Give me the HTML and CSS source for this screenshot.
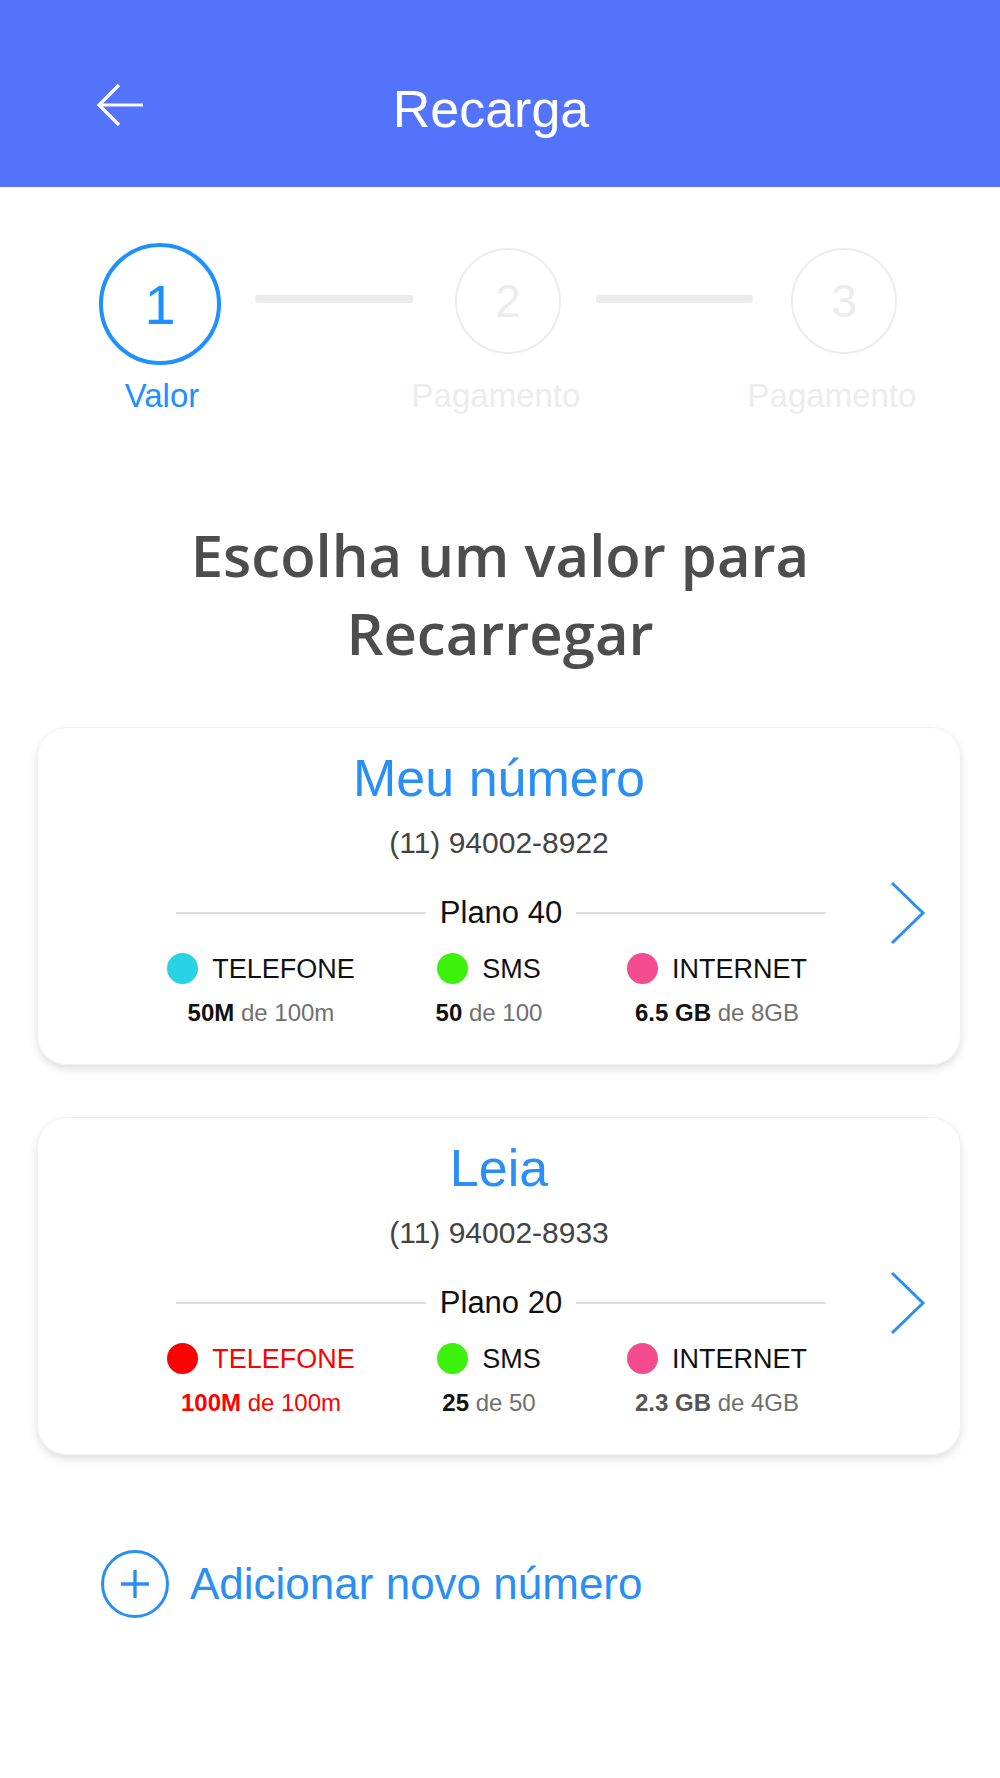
FILE: index.html
```html
<!DOCTYPE html>
<html lang="pt-BR">
<head>
    <meta charset="UTF-8">
    <title>Recarga</title>
    <meta name="viewport" content="width=device-width, initial-scale=1.0">
    <link rel="stylesheet" href="styles.css">
</head>
<body>

<header class="topbar">
    <svg class="back" width="50" height="44" viewBox="0 0 50 44">
        <path d="M47 22 H3 M23 2 L3 22 L23 42" fill="none" stroke="#fff" stroke-width="3.2"/>
    </svg>
    <h1>Recarga</h1>
    <span></span>
</header>

<div class="steps">
    <div class="step active">
        <div class="circle">1</div>
        <div class="label">Valor</div>
    </div>
    <div class="bar bar-1"></div>
    <div class="step">
        <div class="circle">2</div>
        <div class="label">Pagamento</div>
    </div>
    <div class="bar bar-2"></div>
    <div class="step">
        <div class="circle">3</div>
        <div class="label">Pagamento</div>
    </div>
</div>

<h2 class="title">Escolha um valor para<br>Recarregar</h2>

<div class="card">
    <div class="name">Meu número</div>
    <div class="phone">(11) 94002-8922</div>
    <div class="plan">
        <span class="rule"></span>
        <span class="plan-name">Plano 40</span>
        <span class="rule"></span>
        <svg class="next" width="36" height="64" viewBox="0 0 36 64">
            <path d="M2 2 L33 32 L2 62" fill="none" stroke="#2a8ff5" stroke-width="3"/>
        </svg>
    </div>
    <div class="usage">
        <div class="item">
            <div class="item-head"><span class="dot cyan"></span>TELEFONE</div>
            <div class="value"><b>50M</b> de 100m</div>
        </div>
        <div class="item">
            <div class="item-head"><span class="dot green"></span>SMS</div>
            <div class="value"><b>50</b> de 100</div>
        </div>
        <div class="item">
            <div class="item-head"><span class="dot pink"></span>INTERNET</div>
            <div class="value"><b>6.5 GB</b> de 8GB</div>
        </div>
    </div>
</div>

<div class="card">
    <div class="name">Leia</div>
    <div class="phone">(11) 94002-8933</div>
    <div class="plan">
        <span class="rule"></span>
        <span class="plan-name">Plano 20</span>
        <span class="rule"></span>
        <svg class="next" width="36" height="64" viewBox="0 0 36 64">
            <path d="M2 2 L33 32 L2 62" fill="none" stroke="#2a8ff5" stroke-width="3"/>
        </svg>
    </div>
    <div class="usage">
        <div class="item alert">
            <div class="item-head"><span class="dot red"></span>TELEFONE</div>
            <div class="value"><b>100M</b> de 100m</div>
        </div>
        <div class="item">
            <div class="item-head"><span class="dot green"></span>SMS</div>
            <div class="value"><b>25</b> de 50</div>
        </div>
        <div class="item">
            <div class="item-head"><span class="dot pink"></span>INTERNET</div>
            <div class="value"><b class="soft">2.3 GB</b> de 4GB</div>
        </div>
    </div>
</div>

<div class="add">
    <span class="add-icon">
        <svg width="30" height="30" viewBox="0 0 30 30">
            <path d="M15 1 V29 M1 15 H29" stroke="#2a8ff5" stroke-width="3.4"/>
        </svg>
    </span>
    Adicionar novo número
</div>

</body>
</html>
```

FILE: styles.css
```css
body { margin: 0; background: #fff; font-family: "Liberation Sans", Arial, Helvetica, sans-serif; color: #222; }

.topbar { height: 187px; box-sizing: border-box; padding: 30px 114px 0 96px; background: #5373fa; display: grid; grid-template-columns: 1fr auto 1fr; align-items: center; }
.topbar h1 { margin: 0; font-size: 52px; font-weight: normal; color: #fff; line-height: 60px; }
.back { display: block; margin-top: -8px; }

.steps { display: flex; align-items: flex-start; padding: 56px 0 0 99px; }
.step { width: 106px; display: flex; flex-direction: column; align-items: center; height: 172px; }
.step.active { width: 122px; }
.circle { width: 106px; height: 106px; flex: none; margin-top: 5px; box-sizing: border-box; border: 2px solid #ececec; border-radius: 50%; display: flex; align-items: center; justify-content: center; font-size: 46px; color: #ececec; }
.step.active .circle { width: 122px; height: 122px; margin-top: 0; border: 4px solid #1e90ff; font-size: 56px; color: #1e90ff; }
.label { margin-top: auto; margin-right: 24px; font-size: 33px; line-height: 38px; color: #ececec; white-space: nowrap; }
.step.active .label { margin-right: -4px; color: #1e90ff; }
.bar { height: 8px; flex: none; margin-top: 52px; border-radius: 3px; background: #ececec; }
.bar-1 { width: 158px; margin-left: 34px; margin-right: 42px; }
.bar-2 { width: 157px; margin-left: 35px; margin-right: 38px; }

.title { margin: 101px 0 55px; text-align: center; font-family: "Open Sans", sans-serif; font-weight: 600; font-size: 58px; line-height: 78px; color: #4d4d4d; }

.card { margin: 0 39px 52px 37px; height: 338px; box-sizing: border-box; padding-top: 21px; border: 1px solid #f1f1f1; border-radius: 30px; box-shadow: 0 4px 8px rgba(0, 0, 0, 0.13); text-align: center; }
.name { font-size: 52px; line-height: 58px; color: #2a8ff5; }
.phone { margin-top: 19px; font-size: 30px; line-height: 34px; color: #444; }

.plan { display: flex; align-items: center; margin-top: 21px; padding: 0 34px 0 138px; }
.rule { flex: 1; height: 2px; background: #dedede; }
.plan-name { padding: 0 14px 0 14px; font-size: 31px; line-height: 36px; color: #111; }
.next { margin-left: 64px; display: block; }

.usage { display: grid; grid-template-columns: repeat(3, 228px); margin: 8px 0 0 109px; }
.item { display: flex; flex-direction: column; align-items: center; }
.item-head { display: flex; align-items: center; gap: 14px; font-size: 27px; line-height: 30px; color: #111; }
.dot { width: 31px; height: 31px; border-radius: 50%; }
.cyan { background: #29d3e6; }
.green { background: #3cf20c; }
.pink { background: #f54b8f; }
.red { background: #ff0000; }
.value { margin-top: 15px; font-size: 24px; line-height: 28px; color: #707070; white-space: nowrap; }
.value b { color: #111; }
.value b.soft { color: #555; }
.item.alert .item-head, .item.alert .value, .item.alert .value b { color: #ff0000; }

.add { display: flex; align-items: center; gap: 21px; margin: 95px 0 0 101px; font-size: 44px; color: #2a8ff5; }
.add-icon { width: 68px; height: 68px; box-sizing: border-box; border: 3px solid #2a8ff5; border-radius: 50%; display: flex; align-items: center; justify-content: center; }
.add-icon svg { display: block; }
```
